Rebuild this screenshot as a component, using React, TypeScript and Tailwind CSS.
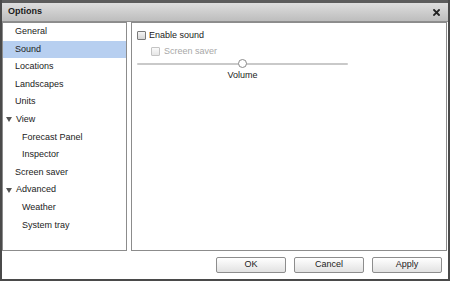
import React from "react";

// Left-hand tree of option pages. depth 0 = top level, 1 = child of a group.
const PAGES: { label: string; depth: number; group?: boolean; selected?: boolean }[] = [
  { label: "General", depth: 0 },
  { label: "Sound", depth: 0, selected: true },
  { label: "Locations", depth: 0 },
  { label: "Landscapes", depth: 0 },
  { label: "Units", depth: 0 },
  { label: "View", depth: 0, group: true },
  { label: "Forecast Panel", depth: 1 },
  { label: "Inspector", depth: 1 },
  { label: "Screen saver", depth: 0 },
  { label: "Advanced", depth: 0, group: true },
  { label: "Weather", depth: 1 },
  { label: "System tray", depth: 1 },
];

const FONT = { fontFamily: '"Liberation Sans", Arial, sans-serif' };

function Checkbox({ disabled }: { disabled?: boolean }) {
  return (
    <span
      className={`inline-block h-[9px] w-[9px] rounded-[1px] border ${
        disabled
          ? "border-[#c4c4c4] bg-gradient-to-b from-[#fafafa] to-[#e6e6e6]"
          : "border-[#7a7a7a] bg-gradient-to-b from-[#f4f4f4] to-[#d6d6d6]"
      }`}
    />
  );
}

function DialogButton({ label }: { label: string }) {
  return (
    <button className="h-[16px] w-[70px] rounded-[2px] border border-[#8d8d8d] bg-gradient-to-b from-[#ffffff] to-[#e2e2e2] text-[9px] leading-none text-[#222]">
      {label}
    </button>
  );
}

export default function App() {
  return (
    <div
      className="flex h-[281px] w-[450px] flex-col overflow-hidden border-x-2 border-b-2 border-[#4a4a4a] bg-white"
      style={FONT}
    >
      <div className="h-[3px] bg-[#5c5c5c]" />

      {/* title bar */}
      <div className="flex h-[19px] items-center justify-between border-b border-[#8e8e8e] bg-gradient-to-b from-[#dedede] to-[#bdbdbd] pl-[6px] pr-[8px]">
        <span className="text-[9px] font-bold text-[#1a1a1a]">Options</span>
        <svg width="7" height="7" viewBox="0 0 7 7">
          <path d="M1 1 L6 6 M6 1 L1 6" stroke="#222" strokeWidth="1.8" strokeLinecap="square" />
        </svg>
      </div>

      {/* body */}
      <div className="flex h-[229px] gap-[4px] pr-[1px]">
        <div className="w-[125px] border border-[#8c8c8c] bg-white">
          {PAGES.map((p) => (
            <div
              key={p.label}
              className={`flex h-[17.6px] items-center text-[9px] text-[#222] ${
                p.selected ? "bg-[#b7cff0]" : ""
              } ${p.depth ? "pl-[19px]" : p.group ? "pl-[3px]" : "pl-[12px]"}`}
            >
              {p.group && (
                <svg width="6" height="5" viewBox="0 0 6 5" className="mr-[4px]">
                  <path d="M0 0 H6 L3 5 Z" fill="#555" />
                </svg>
              )}
              {p.label}
            </div>
          ))}
        </div>

        <div className="flex-1 border border-[#8c8c8c] bg-white px-[5px] pt-[6px]">
          <label className="flex items-center gap-[3px] text-[9px] text-[#222]">
            <Checkbox />
            <span>Enable sound</span>
          </label>
          <label className="mt-[2px] ml-[14px] flex items-center gap-[4px] text-[9px] text-[#a8a8a8]">
            <Checkbox disabled />
            <span>Screen saver</span>
          </label>

          {/* volume slider */}
          <div className="mt-[1px] w-[211px]">
            <div className="relative h-[9px]">
              <div className="absolute left-0 right-0 top-[4px] h-[2px] rounded bg-[#c9c9c9]" />
              <div className="absolute left-[101px] top-0 h-[9px] w-[9px] rounded-full border border-[#8a8a8a] bg-white" />
            </div>
            <div className="mt-[1px] text-center text-[9px] text-[#222]">Volume</div>
          </div>
        </div>
      </div>

      {/* footer */}
      <div className="flex flex-1 items-center justify-end gap-[8px] pr-[6px] pb-[1px]">
        <DialogButton label="OK" />
        <DialogButton label="Cancel" />
        <DialogButton label="Apply" />
      </div>
    </div>
  );
}
